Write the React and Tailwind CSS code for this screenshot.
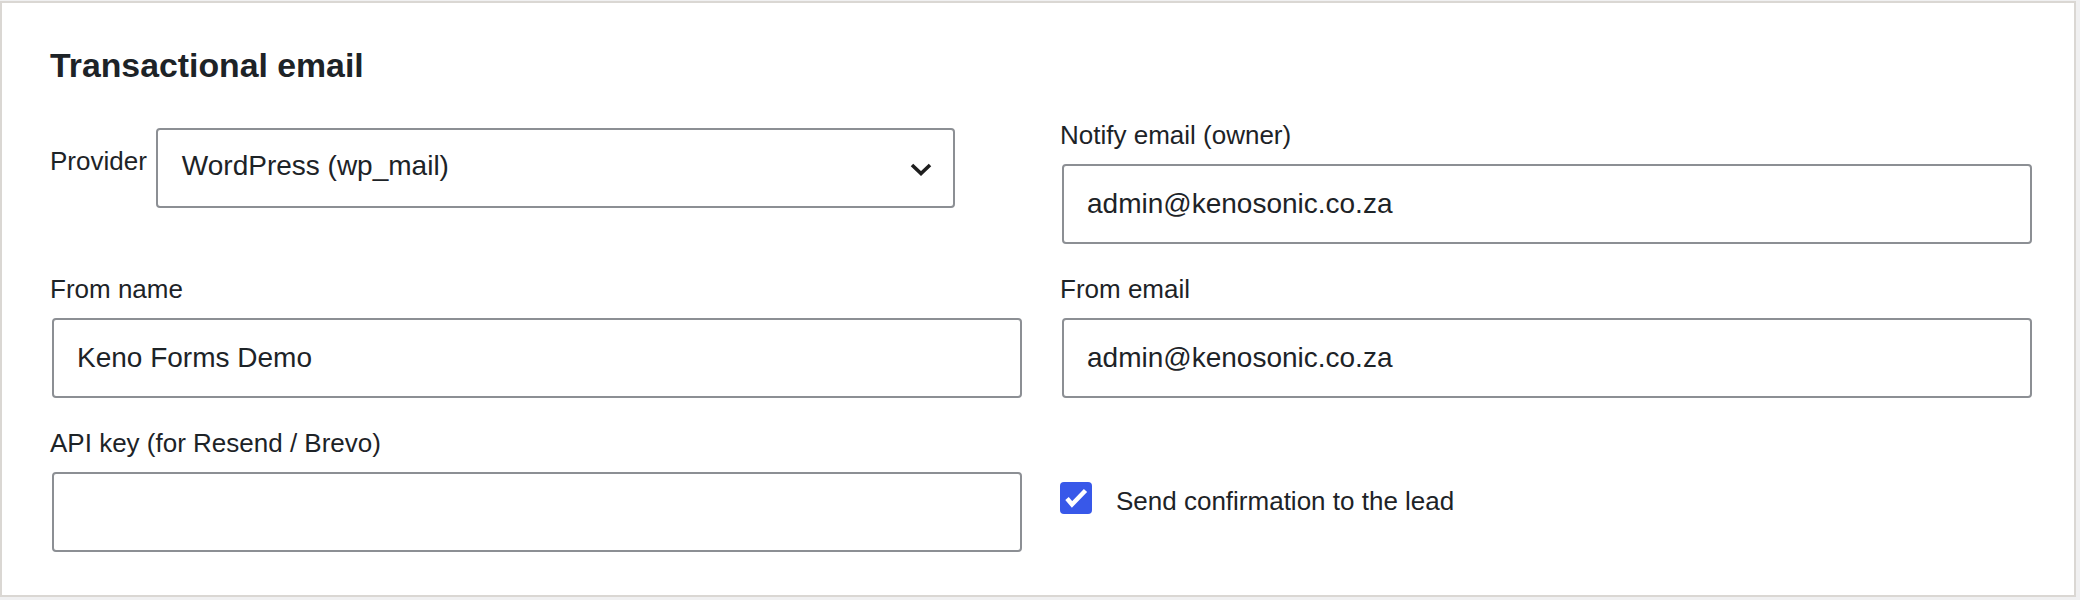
import React from "react";

const font = { fontFamily: '"Liberation Sans", Arial, sans-serif' };

function Label({ children, className = "" }) {
  return (
    <div className={`text-[26px] leading-[36px] text-[#1d2327] ${className}`}>{children}</div>
  );
}

function TextInput({ value = "" }) {
  return (
    <div className="mt-[11px] ml-[2px] w-[970px] h-[80px] rounded-[4px] border-2 border-[#8c8f94] bg-white flex items-center pl-[23px] text-[28px] leading-[32px] text-[#1d2327]">
      {value}
    </div>
  );
}

function Chevron() {
  return (
    <svg width="22" height="13" viewBox="0 0 22 13" className="shrink-0">
      <polyline points="2,2 11,10.5 20,2" fill="none" stroke="#1e1e1e" strokeWidth="3.6" strokeLinejoin="miter" />
    </svg>
  );
}

function Check() {
  return (
    <svg width="32" height="32" viewBox="0 0 32 32">
      <path d="M7 16.5 L12 22.5 L25.5 8.5" fill="none" stroke="#ffffff" strokeWidth="4.5" strokeLinejoin="miter" />
    </svg>
  );
}

export default function App() {
  return (
    <div className="w-[2080px] h-[600px] bg-[#f0f0f1] pt-[1px]" style={font}>
      <div className="w-[2076px] h-[596px] border-2 border-[#dad7d3] bg-white pl-[48px] pt-[42px]">
        <h2 className="text-[33.8px] leading-[40px] font-bold text-[#1d2327]">Transactional email</h2>

        <div className="mt-[32px] grid grid-cols-[1010px_1000px] gap-y-[27px]">
          {/* Provider */}
          <div className="flex items-start">
            <Label className="mt-[26px]">Provider</Label>
            <div className="mt-[11px] ml-[9px] w-[799px] h-[80px] rounded-[4px] border-2 border-[#8c8f94] bg-white flex items-start justify-between pl-[24px] pr-[21px]">
              <span className="pt-[20px] text-[28px] leading-[32px] text-[#1d2327]">WordPress (wp_mail)</span>
              <div className="pt-[33px]">
                <Chevron />
              </div>
            </div>
          </div>

          {/* Notify email */}
          <div>
            <Label>Notify email (owner)</Label>
            <TextInput value="admin@kenosonic.co.za" />
          </div>

          {/* From name */}
          <div>
            <Label>From name</Label>
            <TextInput value="Keno Forms Demo" />
          </div>

          {/* From email */}
          <div>
            <Label>From email</Label>
            <TextInput value="admin@kenosonic.co.za" />
          </div>

          {/* API key */}
          <div>
            <Label>API key (for Resend / Brevo)</Label>
            <TextInput value="" />
          </div>

          {/* Confirmation checkbox */}
          <div className="pt-[57px] flex items-start">
            <div className="w-[32px] h-[32px] rounded-[4px] bg-[#3858e9] flex items-center justify-center">
              <Check />
            </div>
            <Label className="ml-[24px] mt-[1px]">Send confirmation to the lead</Label>
          </div>
        </div>
      </div>
    </div>
  );
}
